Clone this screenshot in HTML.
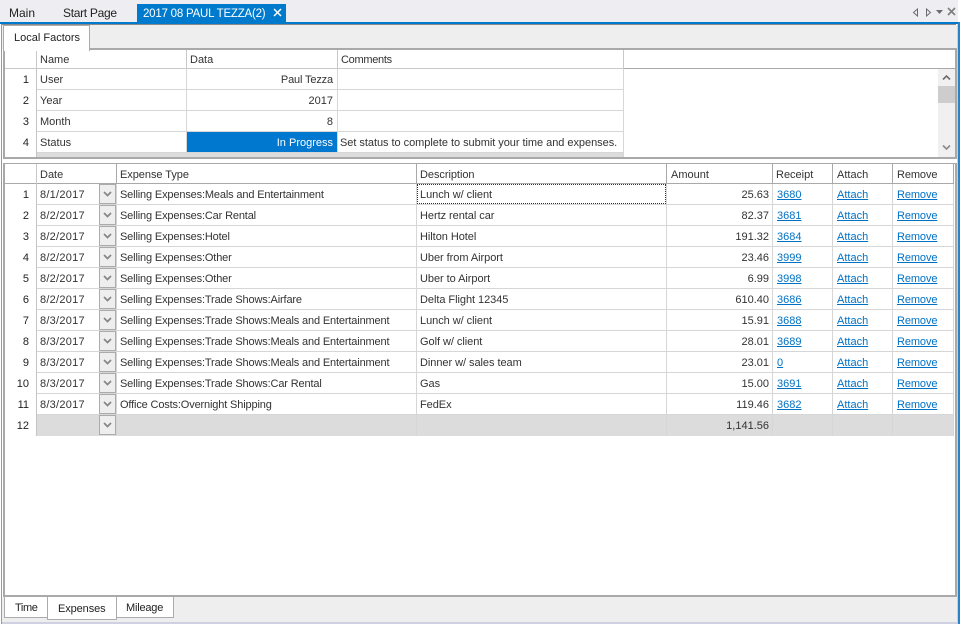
<!DOCTYPE html>
<html><head><meta charset="utf-8">
<style>
html,body{margin:0;padding:0;background:#fff}
#p{position:relative;width:961px;height:624px;overflow:hidden;background:#fff;font-family:"Liberation Sans",sans-serif;font-size:11px;color:#333;}
#p div,#p svg{position:absolute}
.t{white-space:nowrap;line-height:20px;height:21px;box-sizing:border-box;padding:1px 3px 0;overflow:hidden}
.rt{text-align:right;padding-right:4px}
#p .g.rt{padding-right:3px}
.r{left:0;width:956px;height:21px}
.r>div{top:0;height:21px}
.n{left:4px;width:25px;text-align:right;padding:1px 0 0;color:#222}
.a{left:37px;width:149px}.b{left:187px;width:150px}.c{left:338px;width:285px;letter-spacing:-.04px}
.d{left:37px;width:62px;letter-spacing:.25px}.e{left:117px;width:299px;letter-spacing:-.15px}.f{left:417px;width:249px;letter-spacing:-.05px}.g{left:667px;width:105px}.h{left:773px;width:59px;padding-left:4px}.i{left:833px;width:59px;padding-left:4px}.j{left:893px;width:59px;padding-left:4px;letter-spacing:-.1px}
a{color:#0072c6;text-decoration:underline}
.hl{height:1px;background:#d6d6d6}
.vl{width:1px;background:#d6d6d6}
.hh{height:1px;background:#a9a9a9}
.vh{width:1px;background:#a9a9a9}
.hs{height:1px;background:#c8c8c8}
.vs{width:1px;background:#c8c8c8}
.dd{left:99px;width:15px;height:18px!important;border:1px solid #ababab;background:#eeeeee}
.dd svg{left:3px;top:6px}
.top{font-size:12px;color:#222}
</style></head><body><div id="p">

<!-- tab strip -->
<div style="left:0;top:0;width:961px;height:22px;background:#eeeef2"></div>
<div style="left:0;top:22px;width:961px;height:2px;background:#007acc"></div>
<div style="left:1px;top:24px;width:955px;height:1px;background:#8a8a8a"></div>
<div class="t top" style="left:6px;top:2px;">Main</div>
<div class="t top" style="left:60px;top:2px;letter-spacing:-.3px">Start Page</div>
<div style="left:137px;top:4px;width:149px;height:18px;background:#007acc"></div>
<div class="t top" style="left:140px;top:3px;color:#fff;font-size:11.5px;letter-spacing:-.22px">2017 08 PAUL TEZZA(2)</div>
<svg style="left:273px;top:8px" width="9" height="9" viewBox="0 0 9 9"><path d="M1 1L8 8M8 1L1 8" stroke="#fff" stroke-width="1.5"/></svg>
<svg style="left:912px;top:8px" width="7" height="9" viewBox="0 0 7 9"><path d="M5.5 1L1.5 4.5L5.5 8Z" fill="none" stroke="#6d6d70"/></svg>
<svg style="left:925px;top:8px" width="7" height="9" viewBox="0 0 7 9"><path d="M1.5 1L5.5 4.5L1.5 8Z" fill="none" stroke="#6d6d70"/></svg>
<svg style="left:936px;top:10px" width="8" height="5" viewBox="0 0 8 5"><path d="M0 0H7L3.5 4Z" fill="#6d6d70"/></svg>
<svg style="left:947px;top:7px" width="10" height="10" viewBox="0 0 10 10"><path d="M1 1L8 8M8 1L1 8" stroke="#7d7d80" stroke-width="1.6"/></svg>

<!-- frame sides -->
<div style="left:958px;top:0;width:3px;height:624px;background:#fff"></div>
<div style="left:958px;top:22px;width:2px;height:602px;background:#2a83c6"></div>
<div style="left:957px;top:24px;width:1px;height:600px;background:#d0d0d0"></div>
<div style="left:1px;top:24px;width:1px;height:600px;background:#9a9a9a"></div>

<!-- local factors header strip -->
<div style="left:2px;top:25px;width:955px;height:24px;background:#eeeeee"></div>

<!-- grid 1 -->
<div style="left:89px;top:48px;width:868px;height:2px;background:#a9a9a9"></div>
<div style="left:3px;top:50px;width:2px;height:109px;background:#a9a9a9"></div>
<div style="left:955px;top:48px;width:2px;height:111px;background:#a9a9a9"></div>
<div style="left:3px;top:157px;width:954px;height:2px;background:#a9a9a9"></div>
<div style="left:3px;top:25px;width:87px;height:26px;background:#fff;border:1px solid #ababab;border-bottom:0;box-sizing:border-box"></div>
<div class="t" style="left:11px;top:27px;color:#222;">Local Factors</div>
<div class="hs" style="left:5px;top:68px;width:619px"></div>
<div class="hh" style="left:624px;top:68px;width:331px"></div>
<div class="vs" style="left:36px;top:51px;height:18px"></div>
<div class="vs" style="left:186px;top:50px;height:19px"></div>
<div class="vs" style="left:337px;top:50px;height:19px"></div>
<div class="vs" style="left:623px;top:50px;height:19px"></div>
<div class="t a" style="top:49px">Name</div>
<div class="t b" style="top:49px">Data</div>
<div class="t c" style="top:49px;letter-spacing:-.3px">Comments</div>

<div style="left:187px;top:132px;width:150px;height:20px;background:#0078d0"></div>
<div style="left:37px;top:152px;width:587px;height:5px;background:#dcdcdc"></div>
<div class="hl" style="left:37px;top:89px;width:587px;"></div>
<div class="hl" style="left:37px;top:110px;width:587px;"></div>
<div class="hl" style="left:37px;top:131px;width:587px;"></div>
<div class="hl" style="left:37px;top:152px;width:587px;"></div>
<div class="vl" style="left:36px;top:69px;height:88px;background:#c4c4c4"></div>
<div class="vl" style="left:186px;top:69px;height:83px"></div>
<div class="vl" style="left:337px;top:69px;height:83px"></div>
<div class="vl" style="left:623px;top:69px;height:88px"></div>

<div class="r" style="top:69px"><div class="t n">1</div><div class="t a">User</div><div class="t b rt" style="letter-spacing:-.15px">Paul Tezza</div></div>
<div class="r" style="top:90px"><div class="t n">2</div><div class="t a">Year</div><div class="t b rt">2017</div></div>
<div class="r" style="top:111px"><div class="t n">3</div><div class="t a">Month</div><div class="t b rt">8</div></div>
<div class="r" style="top:132px"><div class="t n">4</div><div class="t a">Status</div><div class="t b rt" style="color:#fff">In Progress</div><div class="t c" style="padding-left:2px">Set status to complete to submit your time and expenses.</div></div>

<!-- scrollbar 1 -->
<div style="left:938px;top:69px;width:17px;height:88px;background:#f0f0f0"></div>
<div style="left:938px;top:86px;width:17px;height:17px;background:#cdcdcd"></div>
<svg style="left:942px;top:74px" width="9" height="7" viewBox="0 0 9 7"><path d="M1 5.5L4.5 2L8 5.5" fill="none" stroke="#6d6d6d" stroke-width="1.6"/></svg>
<svg style="left:942px;top:144px" width="9" height="7" viewBox="0 0 9 7"><path d="M1 1.5L4.5 5L8 1.5" fill="none" stroke="#8a8a8a" stroke-width="1.6"/></svg>

<!-- grid 2 -->
<div style="left:3px;top:163px;width:954px;height:1px;background:#a9a9a9"></div>
<div style="left:3px;top:163px;width:2px;height:434px;background:#a9a9a9"></div>
<div style="left:955px;top:163px;width:2px;height:434px;background:#a9a9a9"></div>
<div style="left:3px;top:595px;width:954px;height:2px;background:#a9a9a9"></div>
<div class="hh" style="left:5px;top:183px;width:949px"></div>
<div class="vs" style="left:36px;top:164px;height:20px"></div>
<div class="vh" style="left:116px;top:164px;height:20px"></div>
<div class="vh" style="left:416px;top:164px;height:20px"></div>
<div class="vh" style="left:666px;top:164px;height:20px"></div>
<div class="vh" style="left:772px;top:164px;height:20px"></div>
<div class="vh" style="left:832px;top:164px;height:20px"></div>
<div class="vh" style="left:892px;top:164px;height:20px"></div>
<div class="vh" style="left:953px;top:164px;height:20px"></div>
<div class="t d" style="top:164px;letter-spacing:0">Date</div>
<div class="t e" style="top:164px;letter-spacing:-.05px">Expense Type</div>
<div class="t f" style="top:164px">Description</div>
<div class="t g" style="top:164px;padding-left:4px">Amount</div>
<div class="t h" style="top:164px;padding-left:3px">Receipt</div>
<div class="t i" style="top:164px">Attach</div>
<div class="t j" style="top:164px">Remove</div>

<div style="left:37px;top:415px;width:917px;height:21px;background:#dcdcdc"></div>
<div class="hl" style="left:37px;top:204px;width:917px"></div>
<div class="hl" style="left:37px;top:225px;width:917px"></div>
<div class="hl" style="left:37px;top:246px;width:917px"></div>
<div class="hl" style="left:37px;top:267px;width:917px"></div>
<div class="hl" style="left:37px;top:288px;width:917px"></div>
<div class="hl" style="left:37px;top:309px;width:917px"></div>
<div class="hl" style="left:37px;top:330px;width:917px"></div>
<div class="hl" style="left:37px;top:351px;width:917px"></div>
<div class="hl" style="left:37px;top:372px;width:917px"></div>
<div class="hl" style="left:37px;top:393px;width:917px"></div>
<div class="hl" style="left:37px;top:414px;width:917px"></div>
<div class="vl" style="left:36px;top:184px;height:252px;background:#c4c4c4"></div>
<div class="vl" style="left:116px;top:184px;height:252px"></div>
<div class="vl" style="left:416px;top:184px;height:252px"></div>
<div class="vl" style="left:666px;top:184px;height:252px"></div>
<div class="vl" style="left:772px;top:184px;height:252px"></div>
<div class="vl" style="left:832px;top:184px;height:252px"></div>
<div class="vl" style="left:892px;top:184px;height:252px"></div>
<div class="vl" style="left:953px;top:184px;height:252px"></div>
<div style="left:417px;top:184px;width:247px;height:18px;border:1px dotted #333"></div>

<div class="r" style="top:184px"><div class="t n">1</div><div class="t d">8/1/2017</div><div class="dd"><svg width="9" height="6" viewBox="0 0 9 6"><path d="M1 1L4.5 4.5L8 1" fill="none" stroke="#858585" stroke-width="1.7"/></svg></div><div class="t e">Selling Expenses:Meals and Entertainment</div><div class="t f">Lunch w/ client</div><div class="t g rt">25.63</div><div class="t h"><a href="#">3680</a></div><div class="t i"><a href="#">Attach</a></div><div class="t j"><a href="#">Remove</a></div></div>
<div class="r" style="top:205px"><div class="t n">2</div><div class="t d">8/2/2017</div><div class="dd"><svg width="9" height="6" viewBox="0 0 9 6"><path d="M1 1L4.5 4.5L8 1" fill="none" stroke="#858585" stroke-width="1.7"/></svg></div><div class="t e">Selling Expenses:Car Rental</div><div class="t f">Hertz rental car</div><div class="t g rt">82.37</div><div class="t h"><a href="#">3681</a></div><div class="t i"><a href="#">Attach</a></div><div class="t j"><a href="#">Remove</a></div></div>
<div class="r" style="top:226px"><div class="t n">3</div><div class="t d">8/2/2017</div><div class="dd"><svg width="9" height="6" viewBox="0 0 9 6"><path d="M1 1L4.5 4.5L8 1" fill="none" stroke="#858585" stroke-width="1.7"/></svg></div><div class="t e">Selling Expenses:Hotel</div><div class="t f">Hilton Hotel</div><div class="t g rt">191.32</div><div class="t h"><a href="#">3684</a></div><div class="t i"><a href="#">Attach</a></div><div class="t j"><a href="#">Remove</a></div></div>
<div class="r" style="top:247px"><div class="t n">4</div><div class="t d">8/2/2017</div><div class="dd"><svg width="9" height="6" viewBox="0 0 9 6"><path d="M1 1L4.5 4.5L8 1" fill="none" stroke="#858585" stroke-width="1.7"/></svg></div><div class="t e">Selling Expenses:Other</div><div class="t f">Uber from Airport</div><div class="t g rt">23.46</div><div class="t h"><a href="#">3999</a></div><div class="t i"><a href="#">Attach</a></div><div class="t j"><a href="#">Remove</a></div></div>
<div class="r" style="top:268px"><div class="t n">5</div><div class="t d">8/2/2017</div><div class="dd"><svg width="9" height="6" viewBox="0 0 9 6"><path d="M1 1L4.5 4.5L8 1" fill="none" stroke="#858585" stroke-width="1.7"/></svg></div><div class="t e">Selling Expenses:Other</div><div class="t f">Uber to Airport</div><div class="t g rt">6.99</div><div class="t h"><a href="#">3998</a></div><div class="t i"><a href="#">Attach</a></div><div class="t j"><a href="#">Remove</a></div></div>
<div class="r" style="top:289px"><div class="t n">6</div><div class="t d">8/2/2017</div><div class="dd"><svg width="9" height="6" viewBox="0 0 9 6"><path d="M1 1L4.5 4.5L8 1" fill="none" stroke="#858585" stroke-width="1.7"/></svg></div><div class="t e">Selling Expenses:Trade Shows:Airfare</div><div class="t f">Delta Flight 12345</div><div class="t g rt">610.40</div><div class="t h"><a href="#">3686</a></div><div class="t i"><a href="#">Attach</a></div><div class="t j"><a href="#">Remove</a></div></div>
<div class="r" style="top:310px"><div class="t n">7</div><div class="t d">8/3/2017</div><div class="dd"><svg width="9" height="6" viewBox="0 0 9 6"><path d="M1 1L4.5 4.5L8 1" fill="none" stroke="#858585" stroke-width="1.7"/></svg></div><div class="t e">Selling Expenses:Trade Shows:Meals and Entertainment</div><div class="t f">Lunch w/ client</div><div class="t g rt">15.91</div><div class="t h"><a href="#">3688</a></div><div class="t i"><a href="#">Attach</a></div><div class="t j"><a href="#">Remove</a></div></div>
<div class="r" style="top:331px"><div class="t n">8</div><div class="t d">8/3/2017</div><div class="dd"><svg width="9" height="6" viewBox="0 0 9 6"><path d="M1 1L4.5 4.5L8 1" fill="none" stroke="#858585" stroke-width="1.7"/></svg></div><div class="t e">Selling Expenses:Trade Shows:Meals and Entertainment</div><div class="t f">Golf w/ client</div><div class="t g rt">28.01</div><div class="t h"><a href="#">3689</a></div><div class="t i"><a href="#">Attach</a></div><div class="t j"><a href="#">Remove</a></div></div>
<div class="r" style="top:352px"><div class="t n">9</div><div class="t d">8/3/2017</div><div class="dd"><svg width="9" height="6" viewBox="0 0 9 6"><path d="M1 1L4.5 4.5L8 1" fill="none" stroke="#858585" stroke-width="1.7"/></svg></div><div class="t e">Selling Expenses:Trade Shows:Meals and Entertainment</div><div class="t f">Dinner w/ sales team</div><div class="t g rt">23.01</div><div class="t h"><a href="#">0</a></div><div class="t i"><a href="#">Attach</a></div><div class="t j"><a href="#">Remove</a></div></div>
<div class="r" style="top:373px"><div class="t n">10</div><div class="t d">8/3/2017</div><div class="dd"><svg width="9" height="6" viewBox="0 0 9 6"><path d="M1 1L4.5 4.5L8 1" fill="none" stroke="#858585" stroke-width="1.7"/></svg></div><div class="t e">Selling Expenses:Trade Shows:Car Rental</div><div class="t f">Gas</div><div class="t g rt">15.00</div><div class="t h"><a href="#">3691</a></div><div class="t i"><a href="#">Attach</a></div><div class="t j"><a href="#">Remove</a></div></div>
<div class="r" style="top:394px"><div class="t n">11</div><div class="t d">8/3/2017</div><div class="dd"><svg width="9" height="6" viewBox="0 0 9 6"><path d="M1 1L4.5 4.5L8 1" fill="none" stroke="#858585" stroke-width="1.7"/></svg></div><div class="t e">Office Costs:Overnight Shipping</div><div class="t f">FedEx</div><div class="t g rt">119.46</div><div class="t h"><a href="#">3682</a></div><div class="t i"><a href="#">Attach</a></div><div class="t j"><a href="#">Remove</a></div></div>
<div class="r" style="top:415px"><div class="t n">12</div><div class="dd"><svg width="9" height="6" viewBox="0 0 9 6"><path d="M1 1L4.5 4.5L8 1" fill="none" stroke="#858585" stroke-width="1.7"/></svg></div><div class="t g rt">1,141.56</div></div>

<!-- bottom tabs -->
<div style="left:2px;top:597px;width:955px;height:25px;background:#eeeeee"></div>
<div style="left:2px;top:622px;width:955px;height:2px;background:#cfd0e2"></div>
<div style="left:4px;top:597px;width:44px;height:21px;background:#fff;border:1px solid #ababab;border-top:0;box-sizing:border-box"></div>
<div style="left:116px;top:597px;width:58px;height:21px;background:#fff;border:1px solid #ababab;border-top:0;box-sizing:border-box"></div>
<div style="left:47px;top:596px;width:70px;height:24px;background:#fff;border:1px solid #ababab;box-sizing:border-box"></div>
<div class="t" style="left:12px;top:597px;color:#222;letter-spacing:-.4px">Time</div>
<div class="t" style="left:55px;top:598px;color:#222;letter-spacing:-.1px">Expenses</div>
<div class="t" style="left:123px;top:597px;color:#222;letter-spacing:-.2px">Mileage</div>

</div></body></html>
